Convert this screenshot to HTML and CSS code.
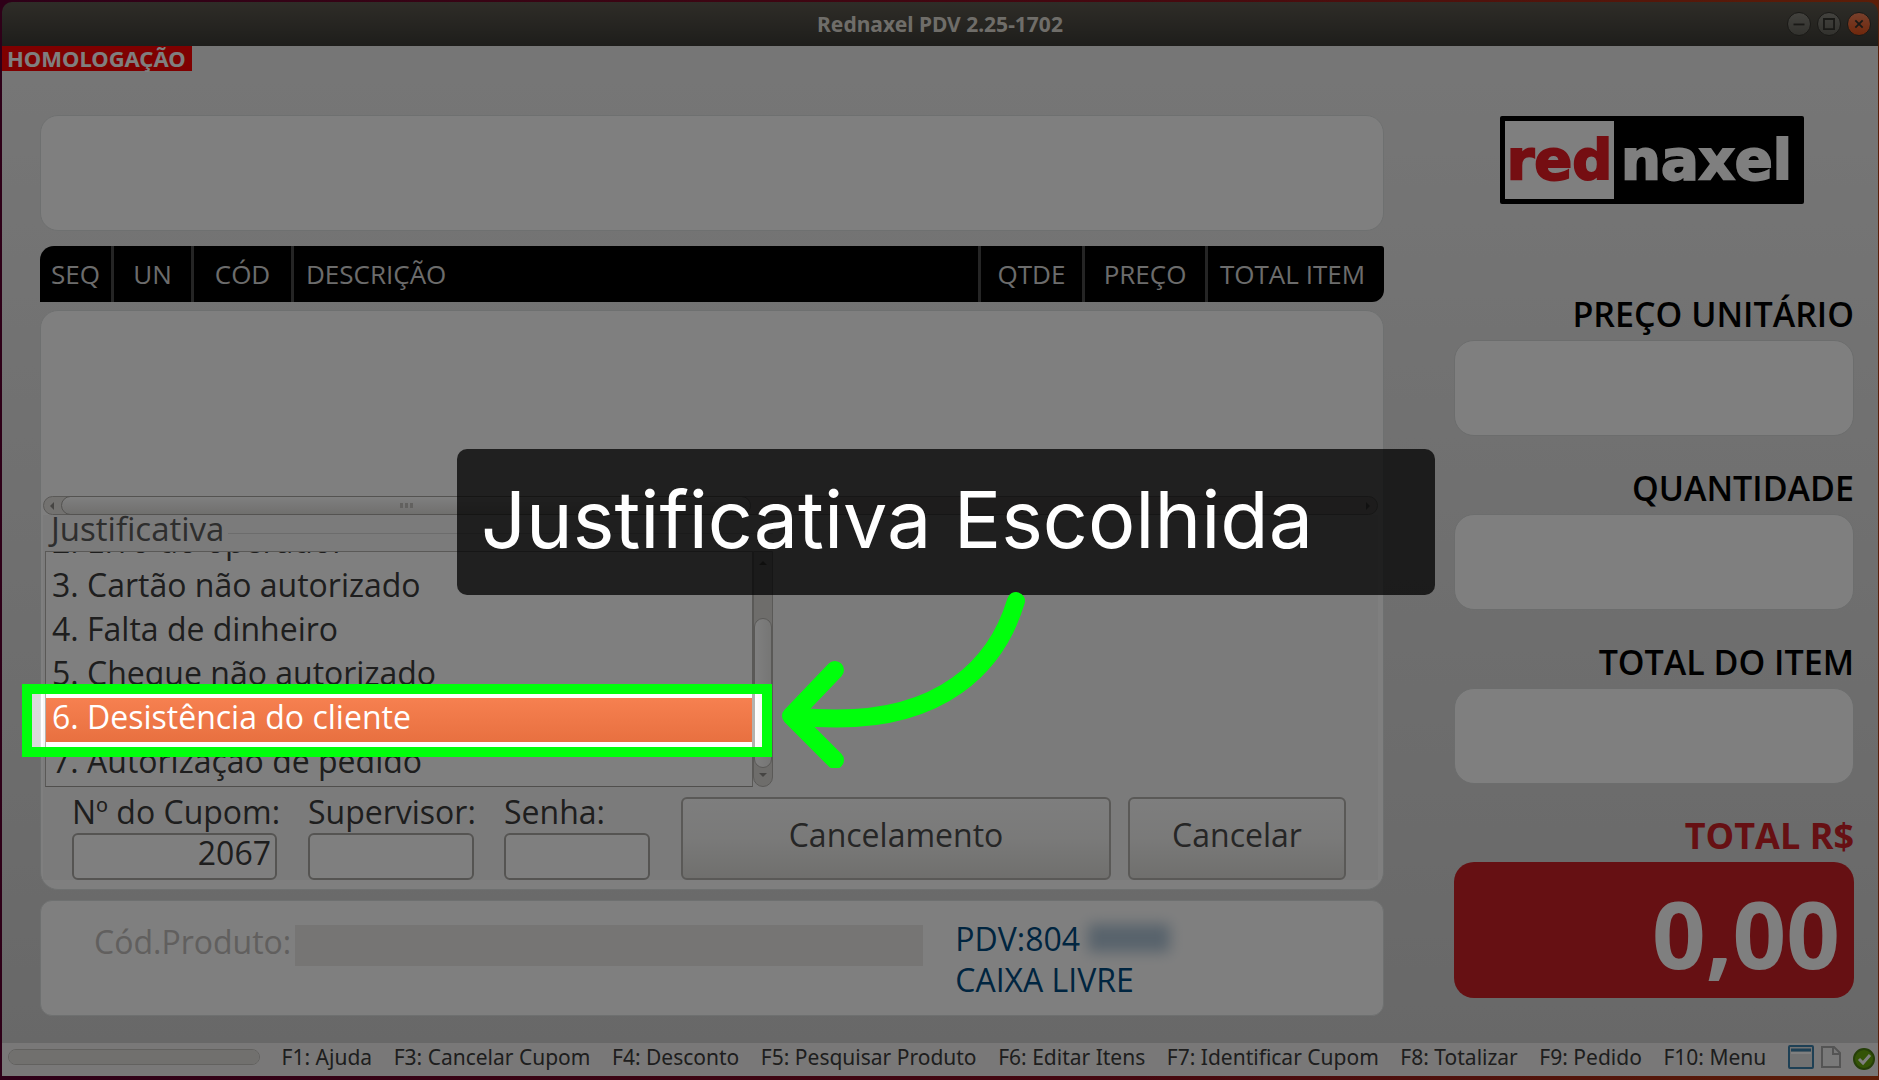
FILE: index.html
```
<!DOCTYPE html>
<html lang="pt-BR">
<head>
  <meta charset="UTF-8">
  <meta name="viewport" content="width=device-width, initial-scale=1.0">
  <title>Rednaxel PDV 2.25-1702</title>
  <link rel="stylesheet" href="styles.css">
</head>
<body>
  <div class="window">
    <header class="titlebar">
      <h1>Rednaxel PDV 2.25-1702</h1>
      <div class="window-buttons">
        <button type="button" aria-label="Minimizar">
          <svg viewBox="0 0 24 24"><path d="M6 12.5h12"/></svg>
        </button>
        <button type="button" aria-label="Maximizar">
          <svg viewBox="0 0 24 24"><path d="M6.500 6.500h11v11h-11z"/></svg>
        </button>
        <button type="button" class="close" aria-label="Fechar">
          <svg viewBox="0 0 24 24"><path d="M8 8l8 8M16 8l-8 8"/></svg>
        </button>
      </div>
    </header>

    <div class="app">
      <span class="tag">HOMOLOGAÇÃO</span>

      <div class="columns">
        <main class="sale">
          <div class="panel display"></div>

          <table class="items">
            <colgroup>
              <col class="col-seq"><col class="col-un"><col class="col-cod"><col>
              <col class="col-qtde"><col class="col-preco"><col class="col-total">
            </colgroup>
            <thead>
              <tr>
                <th>SEQ</th>
                <th>UN</th>
                <th>CÓD</th>
                <th class="left">DESCRIÇÃO</th>
                <th>QTDE</th>
                <th>PREÇO</th>
                <th class="left">TOTAL ITEM</th>
              </tr>
            </thead>
          </table>

          <div class="panel list">
            <div class="rows"></div>
            <div class="hscroll">
              <span class="arrow-left"></span>
              <span class="thumb"><i></i><i></i><i></i></span>
              <span class="arrow-right"></span>
            </div>

            <form class="cancel">
              <div class="legend"><span id="reasonLabel">Justificativa</span></div>
              <div class="reasons">
                <ul role="listbox" aria-labelledby="reasonLabel">
                  <li role="option">2. Erro do operador</li>
                  <li role="option">3. Cartão não autorizado</li>
                  <li role="option">4. Falta de dinheiro</li>
                  <li role="option">5. Cheque não autorizado</li>
                  <li role="option" class="selected" aria-selected="true">6. Desistência do cliente</li>
                  <li role="option">7. Autorização de pedido</li>
                </ul>
                <div class="vscroll">
                  <span class="arrow-up"></span>
                  <span class="thumb"></span>
                  <span class="arrow-down"></span>
                </div>

                <!-- dims everything around the selected reason -->
                <div class="highlight"></div>
                <div class="callout">Justificativa Escolhida</div>
                <svg class="pointer" viewBox="0 0 260 190">
                  <path d="M241 23C225 76 175 156 18 138M60 92L16 138L60 182"/>
                </svg>
              </div>

              <div class="fields">
                <div class="field">
                  <label for="cupom">Nº do Cupom:</label>
                  <input type="text" id="cupom" class="cupom" value="2067">
                </div>
                <div class="field">
                  <label for="supervisor">Supervisor:</label>
                  <input type="text" id="supervisor" class="supervisor">
                </div>
                <div class="field">
                  <label for="senha">Senha:</label>
                  <input type="password" id="senha" class="senha">
                </div>
                <button type="submit" class="confirm">Cancelamento</button>
                <button type="button" class="dismiss">Cancelar</button>
              </div>
            </form>
          </div>

          <div class="panel product">
            <label for="produto">Cód.Produto:</label>
            <input type="text" id="produto" disabled>
            <div class="status">
              <p>PDV:804 <span class="hidden-number"></span></p>
              <p>CAIXA LIVRE</p>
            </div>
          </div>
        </main>

        <aside class="totals">
          <div class="logo"><span>red</span><b>naxel</b></div>
          <div class="total">
            <label for="preco">PREÇO UNITÁRIO</label>
            <input type="text" id="preco" readonly>
          </div>
          <div class="total">
            <label for="quantidade">QUANTIDADE</label>
            <input type="text" id="quantidade" readonly>
          </div>
          <div class="total">
            <label for="totalItem">TOTAL DO ITEM</label>
            <input type="text" id="totalItem" readonly>
          </div>
          <div class="total grand">
            <label for="total">TOTAL R$</label>
            <input type="text" id="total" value="0,00" readonly>
          </div>
        </aside>
      </div>

      <footer class="statusbar">
        <progress value="0" max="100" aria-label="Progresso"></progress>
        <span>F1: Ajuda</span>
        <span>F3: Cancelar Cupom</span>
        <span>F4: Desconto</span>
        <span>F5: Pesquisar Produto</span>
        <span>F6: Editar Itens</span>
        <span>F7: Identificar Cupom</span>
        <span>F8: Totalizar</span>
        <span>F9: Pedido</span>
        <span>F10: Menu</span>
        <div class="tray">
          <svg width="26" height="24" viewBox="0 0 26 24">
            <rect x="1" y="1" width="24" height="22" rx="1" fill="#e4e4e4" stroke="#3c80aa" stroke-width="2"/>
            <path d="M3 5h20" stroke="#3c80aa" stroke-width="3"/>
            <path d="M3 8h20" stroke="#ffffff" stroke-width="2"/>
          </svg>
          <svg width="20" height="22" viewBox="0 0 20 22">
            <path d="M1 1h12l6 6v14H1z" fill="#f2f2f2" stroke="#a8a8a8" stroke-width="2"/>
            <path d="M12 1v7h7" fill="none" stroke="#a8a8a8" stroke-width="2"/>
          </svg>
          <svg class="ok" width="22" height="22" viewBox="0 0 22 22">
            <circle cx="11" cy="11" r="10" fill="#68a80c" stroke="#4a7c10" stroke-width="2"/>
            <path d="M6 11l4 4 7-8" fill="none" stroke="#ffffff" stroke-width="3"/>
          </svg>
        </div>
      </footer>
    </div>
  </div>
</body>
</html>
```
FILE: styles.css
```
* {
  box-sizing: border-box;
}

body {
  margin: 0;
  min-height: 100vh;
  padding: 2px 1px 4px 2px;
  display: flex;
  overflow: hidden;
  font-family: "Open Sans", "Noto Sans", sans-serif;
  font-size: 32px;
  line-height: 40px;
  color: #4c4c4c;
  background: linear-gradient(to right, #5c0030, #8c1020 60%, #b83c10);
}

input,
button {
  font: inherit;
  color: inherit;
}

p,
ul {
  margin: 0;
  padding: 0;
  list-style: none;
}

.window {
  flex: 1;
  display: flex;
  flex-direction: column;
}

/* title bar */

.titlebar {
  height: 44px;
  display: flex;
  align-items: center;
  position: relative;
  border-radius: 10px 10px 0 0;
  background: linear-gradient(#5e5a50, #3c3b36);
}

.titlebar h1 {
  flex: 1;
  margin: 0;
  text-align: center;
  font-family: "Noto Sans", sans-serif;
  font-size: 21px;
  line-height: 24px;
  color: #dfdbd2;
}

.window-buttons {
  position: absolute;
  right: 7px;
  display: flex;
  gap: 6px;
}

.window-buttons button {
  width: 24px;
  height: 24px;
  padding: 0;
  border: 1px solid #34332e;
  border-radius: 50%;
  background: linear-gradient(#86847c, #65645c);
}

.window-buttons .close {
  background: linear-gradient(#f08058, #e05018);
}

.window-buttons svg {
  display: block;
  fill: none;
  stroke: #33322d;
  stroke-width: 2;
}

/* main area */

.app {
  flex: 1;
  display: flex;
  flex-direction: column;
  background: linear-gradient(#ededed, #d0d0d0);
}

.tag {
  align-self: flex-start;
  width: 190px;
  padding-left: 5px;
  font-family: "Noto Sans", sans-serif;
  font-size: 22px;
  font-weight: bold;
  line-height: 25px;
  color: #ffffff;
  background: #ff0000;
}

.columns {
  flex: 1;
  display: grid;
  grid-template-columns: 1fr 400px;
  gap: 70px;
  padding: 44px 24px 27px 38px;
}

.sale {
  display: flex;
  flex-direction: column;
}

.panel {
  border: 1px solid #dde0e0;
  border-radius: 18px;
  background: #ffffff;
}

.display {
  height: 116px;
  margin-bottom: 15px;
}

.items {
  width: 100%;
  height: 56px;
  margin-bottom: 8px;
  table-layout: fixed;
  border-collapse: separate;
  border-spacing: 0;
  border-radius: 14px 3px 12px 0;
  overflow: hidden;
  background: #000000;
}

.items th {
  padding: 0;
  border-right: 3px solid #4a4a4a;
  font-size: 26px;
  font-weight: normal;
  line-height: 32px;
  color: #d8d8d8;
}

.items th:last-child {
  border-right: none;
}

.items .left {
  padding-left: 12px;
  text-align: left;
}

.col-seq { width: 74px; }
.col-un { width: 80px; }
.col-cod { width: 100px; }
.col-qtde { width: 104px; }
.col-preco { width: 123px; }
.col-total { width: 176px; }

.list {
  flex: 1;
  display: flex;
  flex-direction: column;
  padding: 0 5px 9px 2px;
  margin-bottom: 10px;
}

.rows {
  flex: 1;
}

/* scrollbars */

.hscroll {
  height: 19px;
  display: flex;
  align-items: center;
  border: 1px solid #b4b2ae;
  border-radius: 10px;
  background: #e6e4e1;
}

.hscroll .thumb {
  width: 690px;
  height: 19px;
  margin-right: auto;
  display: flex;
  justify-content: center;
  align-items: center;
  gap: 2px;
  border: 1px solid #a8a6a2;
  border-radius: 10px;
  background: linear-gradient(#ffffff, #e0dfdc);
}

.hscroll i {
  width: 3px;
  height: 5px;
  background: #c4c2be;
}

.arrow-left,
.arrow-right {
  margin: 0 7px;
  border: 4px solid transparent;
}

.arrow-left {
  margin-left: 2px;
  border-right-color: #8c8a86;
}

.arrow-right {
  margin-right: 3px;
  border-left-color: #8c8a86;
}

.vscroll {
  width: 20px;
  display: flex;
  flex-direction: column;
  align-items: center;
  border: 1px solid #b4b2ae;
  border-radius: 0 0 10px 10px;
  background: #dddbd7;
}

.vscroll .thumb {
  width: 18px;
  height: 150px;
  margin-top: auto;
  border: 1px solid #b4b2ae;
  border-radius: 10px;
  background: linear-gradient(to right, #ffffff, #ececea);
}

.arrow-up,
.arrow-down {
  margin: 5px 0;
  border: 4px solid transparent;
}

.arrow-up {
  border-bottom-color: #7c7a76;
}

.arrow-down {
  border-top-color: #8c8a86;
}

/* cancel form */

.cancel {
  background: #f6f6f6;
}

.legend {
  height: 36px;
  display: flex;
  align-items: flex-start;
  gap: 4px;
  width: 730px;
  padding-left: 8px;
  font-size: 33px;
  line-height: 28px;
  color: #5c5c5c;
}

.legend::after {
  content: "";
  flex: 1;
  align-self: center;
  border-top: 1px solid #d8d8d8;
}

.reasons {
  position: relative;
  width: 728px;
  height: 236px;
  margin-left: 2px;
  display: flex;
}

.reasons ul {
  flex: 1;
  display: flex;
  flex-direction: column;
  justify-content: flex-end;
  overflow: hidden;
  border: 1px solid #b4b2ae;
  border-bottom-color: #a09e9a;
  background: #ffffff;
}

.reasons li {
  flex: none;
  padding: 0 0 6px 6px;
  line-height: 38px;
  color: #3c3c3c;
}

.reasons .selected {
  color: #ffffff;
  background: linear-gradient(#f68050, #e87040);
}

.highlight {
  position: absolute;
  left: -23px;
  right: 1px;
  bottom: 30px;
  height: 73px;
  z-index: 1;
  border: 10px solid #00ff0c;
  box-shadow: 0 0 0 3000px rgba(0, 0, 0, 0.5);
}

.callout {
  position: absolute;
  left: 412px;
  bottom: 192px;
  z-index: 2;
  width: 978px;
  padding: 20px 24px 26px;
  border-radius: 10px;
  font-family: Inter, sans-serif;
  font-size: 79px;
  line-height: 100px;
  white-space: nowrap;
  color: #ffffff;
  background: rgba(0, 0, 0, 0.75);
}

.pointer {
  position: absolute;
  left: 730px;
  bottom: 19px;
  z-index: 3;
  width: 260px;
  height: 190px;
  fill: none;
  stroke: #00ff0c;
  stroke-width: 18;
  stroke-linecap: round;
  stroke-linejoin: round;
}

.fields {
  display: flex;
  align-items: flex-end;
  padding: 4px 32px 0 29px;
}

.field {
  display: flex;
  flex-direction: column;
  color: #3c3c3c;
}

.field label {
  line-height: 42px;
}

.field input {
  height: 47px;
  padding: 0 4px 8px;
  border: 2px solid #aaa8a4;
  border-radius: 6px;
  text-align: right;
  background: #ffffff;
}

.cupom {
  width: 205px;
  margin-right: 31px;
}

.supervisor {
  width: 166px;
  margin-right: 30px;
}

.senha {
  width: 146px;
  margin-right: 31px;
}

.fields button {
  height: 83px;
  padding-bottom: 8px;
  border: 2px solid #b4b2ae;
  border-radius: 6px;
  background: linear-gradient(#fcfcfc, #f4f4f3 50%, #e0dfdb);
}

.fields .confirm {
  flex: 1;
  margin-right: 17px;
}

.fields .dismiss {
  width: 218px;
}

/* product */

.product {
  height: 116px;
  display: flex;
  align-items: flex-start;
  padding: 17px 0 0 53px;
  border-radius: 12px;
}

.product label {
  padding-top: 4px;
  margin-right: 4px;
  color: #c2bfbc;
}

.product input {
  width: 628px;
  height: 41px;
  margin: 7px 32px 0 0;
  border: none;
  background: #edebe8;
}

.status {
  color: #004a80;
}

.status p {
  display: flex;
  line-height: 41px;
}

.hidden-number {
  width: 82px;
  height: 28px;
  margin: 6px 0 0 8px;
  background: #b0c6d8;
  filter: blur(7px);
}

/* totals */

.totals {
  display: flex;
  flex-direction: column;
  gap: 34px;
}

.logo {
  align-self: center;
  width: 304px;
  height: 88px;
  margin: 1px 4px 58px 0;
  padding: 5px;
  display: flex;
  align-items: center;
  border-radius: 2px;
  font-family: "DejaVu Sans", sans-serif;
  font-size: 56px;
  font-weight: bold;
  line-height: 78px;
  color: #ffffff;
  background: #000000;
  -webkit-text-stroke: 2px currentColor;
}

.logo span {
  width: 109px;
  text-align: center;
  color: #ea1c24;
  background: #ffffff;
}

.logo b {
  flex: 1;
  text-align: center;
}

.total {
  display: flex;
  flex-direction: column;
  gap: 8px;
}

.total label {
  text-align: right;
  font-size: 34px;
  font-weight: 600;
  line-height: 36px;
  color: #000000;
}

.total input {
  width: 100%;
  height: 96px;
  padding: 0 16px;
  border: 1px solid #d8dada;
  border-radius: 20px;
  text-align: right;
  background: #ffffff;
}

.grand label {
  font-size: 36px;
  font-weight: bold;
  color: #cc2026;
}

.grand input {
  height: 136px;
  padding: 6px 14px 0;
  border: none;
  font-size: 94px;
  font-weight: bold;
  color: #ffffff;
  background: #cc2026;
}

/* status bar */

.statusbar {
  height: 33px;
  display: flex;
  align-items: center;
  justify-content: space-between;
  padding: 0 3px 5px 6px;
  font-family: "Noto Sans", sans-serif;
  font-size: 21px;
  line-height: 28px;
  white-space: nowrap;
  color: #3c3c3c;
  background: #f2f1f0;
}

progress {
  width: 252px;
  height: 16px;
  appearance: none;
  border: 1px solid #c4c2be;
  border-radius: 8px;
  overflow: hidden;
}

progress::-webkit-progress-bar {
  background: #e2e0dc;
}

.tray {
  display: flex;
  align-items: center;
  gap: 7px;
}

.ok {
  margin: 3px 0 0 5px;
}
```
